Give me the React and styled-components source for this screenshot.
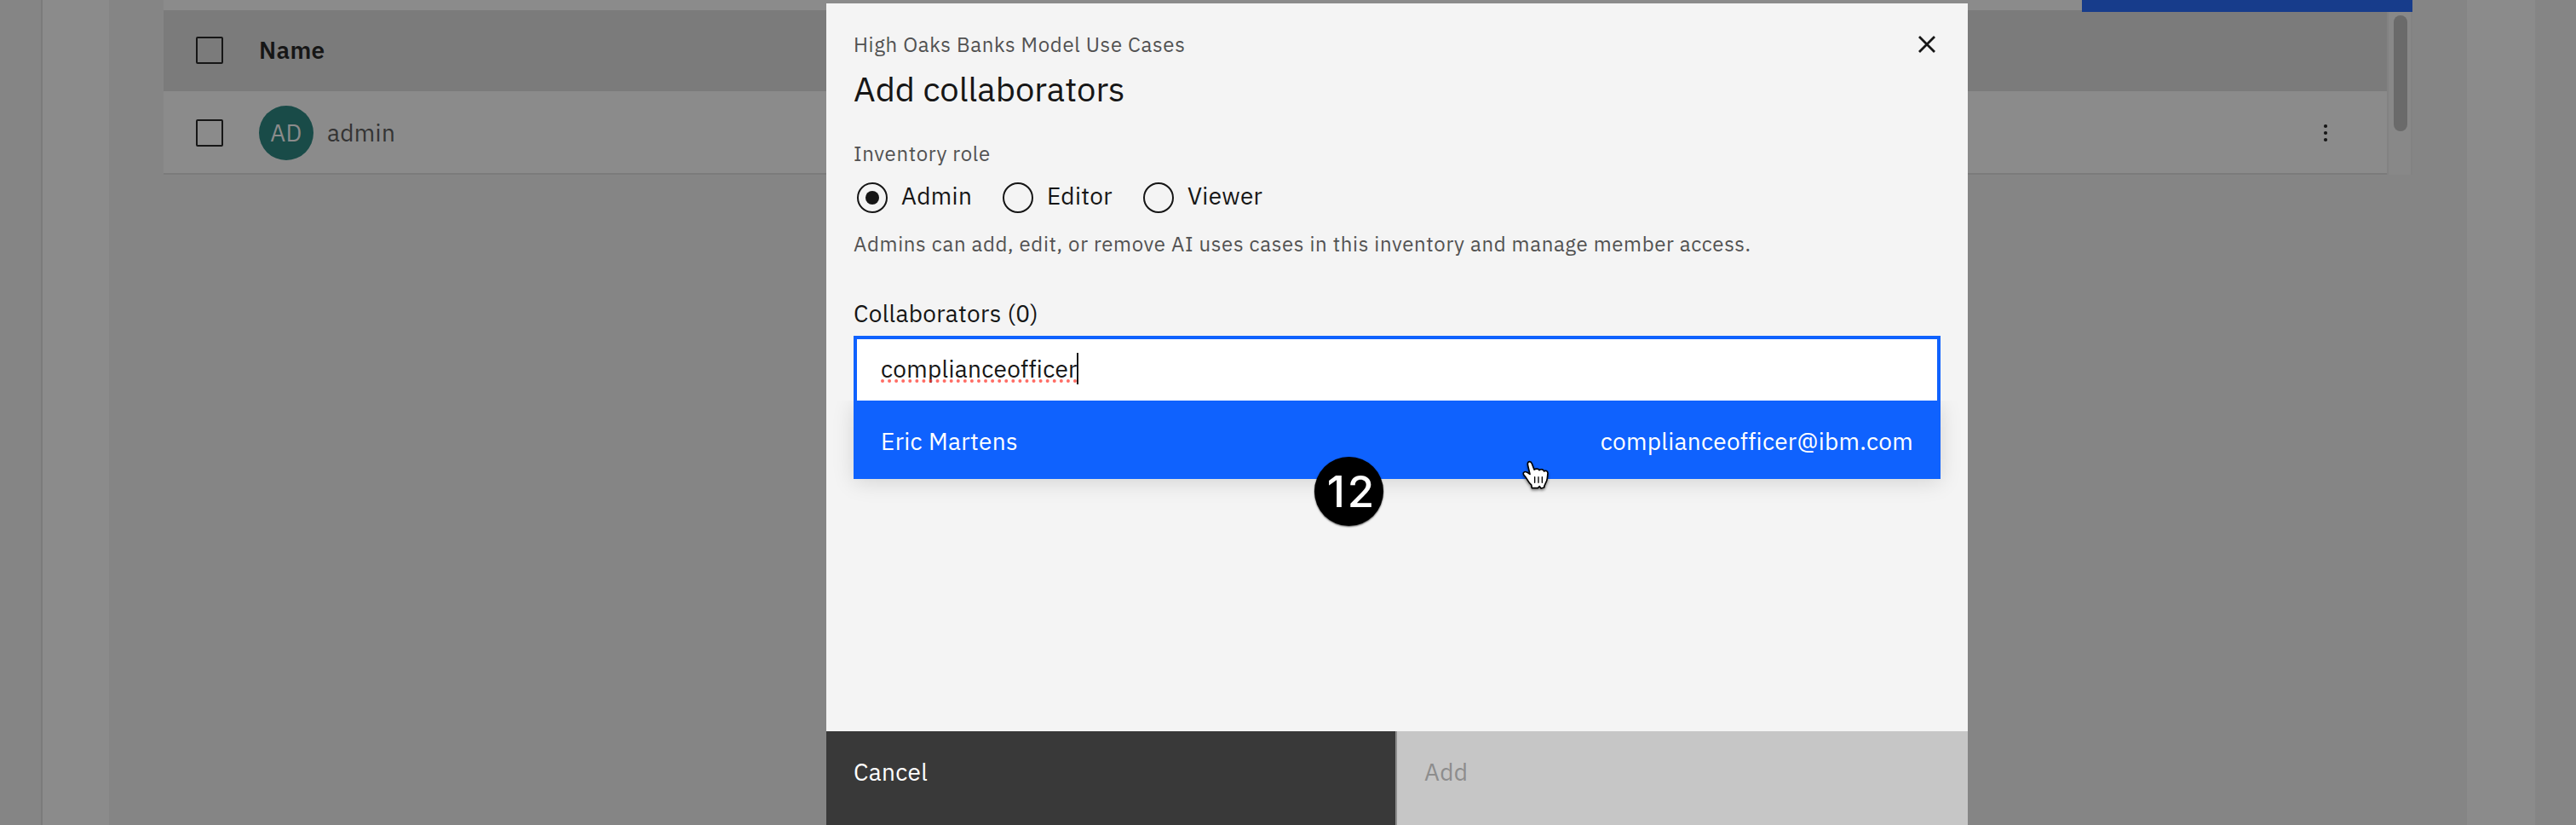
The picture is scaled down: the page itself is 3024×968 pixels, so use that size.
import React from "react";
import styled, { createGlobalStyle } from "styled-components";

const Global = createGlobalStyle`
  *, *::before, *::after { box-sizing: border-box; }
  html, body { margin: 0; padding: 0; }
  body {
    width: 3024px; height: 968px; overflow: hidden;
    font-family: "IBM Plex Sans", Roboto, "Liberation Sans", sans-serif;
    font-size: 28px; color: #161616; background: #858585;
  }
`;

const Text = styled.span`
  display: block;
  white-space: pre;
  line-height: 36px;
  font-size: 28px;
  font-weight: ${(p) => p.$weight || 400};
  letter-spacing: 0.32px;
  color: ${(p) => p.$color || "#161616"};
`;
const SmallText = styled(Text)`
  font-size: 24px;
  letter-spacing: 0.64px;
  color: #525252;
`;
const Title = styled.h2`
  margin: 8px 0 0;
  font-size: 40px;
  font-weight: 400;
  line-height: 52px;
`;

const Screen = styled.div`
  position: relative;
  width: 3024px;
  height: 968px;
  overflow: hidden;
  display: flex;
`;
const SideRail = styled.aside`
  width: 50px;
  background: #858585;
  border-right: 2px solid #7b7b7b;
`;
const Sheet = styled.main`
  width: 2926px;
  padding: 0 80px 0 78px;
  background: #8b8b8b;
`;
const Workspace = styled.section`
  height: 968px;
  padding: 0 64px;
  background: #858585;
`;
const Toolbar = styled.div`
  height: 12px;
  display: flex;
  justify-content: flex-end;
  background: #8b8b8b;
`;
const AddButton = styled.div`
  width: 388px;
  height: 14px;
  background: #173c8b;
  position: relative;
  z-index: 1;
`;
const TableArea = styled.div`
  display: flex;
  height: 193px;
`;
const Table = styled.div`
  width: 2610px;
`;
const Row = styled.div`
  display: flex;
  align-items: center;
  height: ${(p) => (p.$head ? 95 : 98)}px;
  padding: ${(p) => (p.$head ? "0 62px 1px 38px" : "2px 62px 0 38px")};
  background: ${(p) => (p.$head ? "#7b7b7b" : "#8b8b8b")};
  border-bottom: ${(p) => (p.$head ? "0" : "2px solid #7b7b7b")};
`;
const Checkbox = styled.div`
  width: 32px;
  height: 32px;
  border: 2px solid #161616;
  border-radius: 2px;
  margin-right: 42px;
`;
const Avatar = styled.div`
  width: 64px;
  height: 64px;
  border-radius: 50%;
  display: flex;
  align-items: center;
  justify-content: center;
  margin-right: 16px;
  background: #194b48;
`;
const RowMenu = styled.svg`
  margin-left: auto;
`;
const ScrollTrack = styled.div`
  width: 30px;
  padding: 6px 4px 0 6px;
  background: #888888;
  border-left: 2px solid #828282;
  border-right: 2px solid #828282;
`;
const ScrollThumb = styled.div`
  width: 16px;
  height: 136px;
  border-radius: 8px;
  background: #6a6a6a;
`;

const Modal = styled.div`
  position: absolute;
  left: 970px;
  top: 4px;
  width: 1340px;
  height: 964px;
  background: #f4f4f4;
  display: flex;
  flex-direction: column;
`;
const ModalHead = styled.header`
  height: 158px;
  padding: 30px 32px 0;
  display: flex;
  justify-content: space-between;
`;
const CloseIcon = styled.svg`
  margin: 6px 4px 0 0;
`;
const Body = styled.div`
  flex: 1;
  padding: 0 32px;
`;
const Radios = styled.div`
  display: flex;
  height: 36px;
  margin: 16px 0 18px 4px;
`;
const RadioOption = styled.label`
  display: flex;
  align-items: center;
  width: ${(p) => p.$width}px;
`;
const RadioLabel = styled(Text)`
  margin-bottom: 5px;
`;
const RadioCircle = styled.span`
  width: 36px;
  height: 36px;
  border-radius: 50%;
  border: 2px solid #161616;
  margin-right: 16px;
  display: grid;
  place-items: center;
  &::after {
    content: "";
    width: 16px;
    height: 16px;
    border-radius: 50%;
    background: ${(p) => (p.$on ? "#161616" : "transparent")};
  }
`;
const FieldLabel = styled(Text)`
  margin-top: 46px;
`;
const Field = styled.div`
  height: 80px;
  margin-top: 8px;
  border: 4px solid #0f62fe;
  background: #fff;
  padding: 16px 28px 0;
  display: flex;
`;
const Typed = styled.div`
  position: relative;
  height: 38px;
  padding-top: 1px;
  margin-right: -1px;
`;
const Squiggle = styled.svg`
  position: absolute;
  left: 0;
  top: 31px;
`;
const Caret = styled.span`
  width: 2px;
  height: 37px;
  background: #161616;
`;
const Option = styled.div`
  height: 92px;
  margin-top: -4px;
  padding: 4px 32px 0;
  display: flex;
  align-items: center;
  justify-content: space-between;
  background: #0f62fe;
  box-shadow: 0 4px 24px rgba(0, 0, 0, 0.13);
  clip-path: inset(0 -40px -40px -40px);
`;
const Footer = styled.footer`
  display: flex;
  height: 110px;
`;
const FooterButton = styled.div`
  width: 670px;
  padding: 30px 32px 0;
  background: ${(p) => (p.$off ? "#c6c6c6" : "#393939")};
  border-right: ${(p) => (p.$off ? "0" : "2px solid #8d8d8d")};
`;
const Step = styled.div`
  position: absolute;
  left: 1543px;
  top: 536px;
  width: 81px;
  height: 81px;
  padding-left: 7px;
  border-radius: 50%;
  background: #000;
  color: #fff;
  display: flex;
  align-items: center;
  justify-content: center;
  font: 500 51px/56px Inter, "Liberation Sans", sans-serif;
  letter-spacing: 3px;
  box-shadow: 0 1px 2px rgba(0, 0, 0, 0.7);
`;
const Hand = styled.svg`
  position: absolute;
  left: 1770px;
  top: 530px;
  overflow: visible;
  filter: drop-shadow(0 2px 1.5px rgba(0, 0, 0, 0.45));
`;

const dots = Array.from({ length: 29 }, (_, i) => 2 + i * 8.07);

export default function App() {
  return (
    <>
      <Global />
      <Screen>
        <SideRail />
        <Sheet>
          <Workspace>
            <Toolbar><AddButton /></Toolbar>
            <TableArea>
              <Table>
                <Row $head>
                  <Checkbox />
                  <Text $weight={600}>Name</Text>
                </Row>
                <Row>
                  <Checkbox />
                  <Avatar><Text $color="#8b8b8b">AD</Text></Avatar>
                  <Text $color="#343434">admin</Text>
                  <RowMenu width="20" height="24" viewBox="0 0 20 24" fill="#161616">
                    <circle cx="10" cy="4" r="2.1" />
                    <circle cx="10" cy="12" r="2.1" />
                    <circle cx="10" cy="20" r="2.1" />
                  </RowMenu>
                </Row>
              </Table>
              <ScrollTrack><ScrollThumb /></ScrollTrack>
            </TableArea>
          </Workspace>
        </Sheet>

        <Modal>
          <ModalHead>
            <div>
              <SmallText>High Oaks Banks Model Use Cases</SmallText>
              <Title>Add collaborators</Title>
            </div>
            <CloseIcon width="24" height="24" viewBox="0 0 24 24" stroke="#161616" strokeWidth="2.8">
              <path d="M3 3 21 21M21 3 3 21" />
            </CloseIcon>
          </ModalHead>
          <Body>
            <SmallText>Inventory role</SmallText>
            <Radios>
              <RadioOption $width={171}><RadioCircle $on /><RadioLabel>Admin</RadioLabel></RadioOption>
              <RadioOption $width={165}><RadioCircle /><RadioLabel>Editor</RadioLabel></RadioOption>
              <RadioOption $width={165}><RadioCircle /><RadioLabel>Viewer</RadioLabel></RadioOption>
            </Radios>
            <SmallText>Admins can add, edit, or remove AI uses cases in this inventory and manage member access.</SmallText>
            <FieldLabel>Collaborators (0)</FieldLabel>
            <Field>
              <Typed>
                <Text>complianceofficer</Text>
                <Squiggle width="230" height="4">
                  {dots.map((x) => <circle key={x} cx={x} cy="2" r="2" fill="#ff3b30" opacity=".75" />)}
                </Squiggle>
              </Typed>
              <Caret />
            </Field>
            <Option>
              <Text $color="#fff">Eric Martens</Text>
              <Text $color="#fff">complianceofficer@ibm.com</Text>
            </Option>
          </Body>
          <Footer>
            <FooterButton><Text $color="#fff">Cancel</Text></FooterButton>
            <FooterButton $off><Text $color="#8d8d8d">Add</Text></FooterButton>
          </Footer>
        </Modal>

        <Step>12</Step>
        <Hand width="70" height="60" viewBox="0 0 210 180" stroke="#000" strokeLinejoin="round" strokeLinecap="round">
          <path
            fill="#fff"
            strokeWidth="5"
            d="M77 35C70 35 69 42 71 49L78 79C73 75 65 69 59 71C52 74 54 80 61 87C68 95 72 109 83 117L85 128H106L112 122L117 129L128 126C128 115 138 108 139 94L141 76C141 67 132 65 128 69C126 62 116 60 111 65C108 59 98 59 93 63L85 42C83 37 81 35 77 35Z"
          />
          <path fill="none" strokeWidth="4" d="M95 89V109M108 89V109M121 89V109" />
        </Hand>
      </Screen>
    </>
  );
}
